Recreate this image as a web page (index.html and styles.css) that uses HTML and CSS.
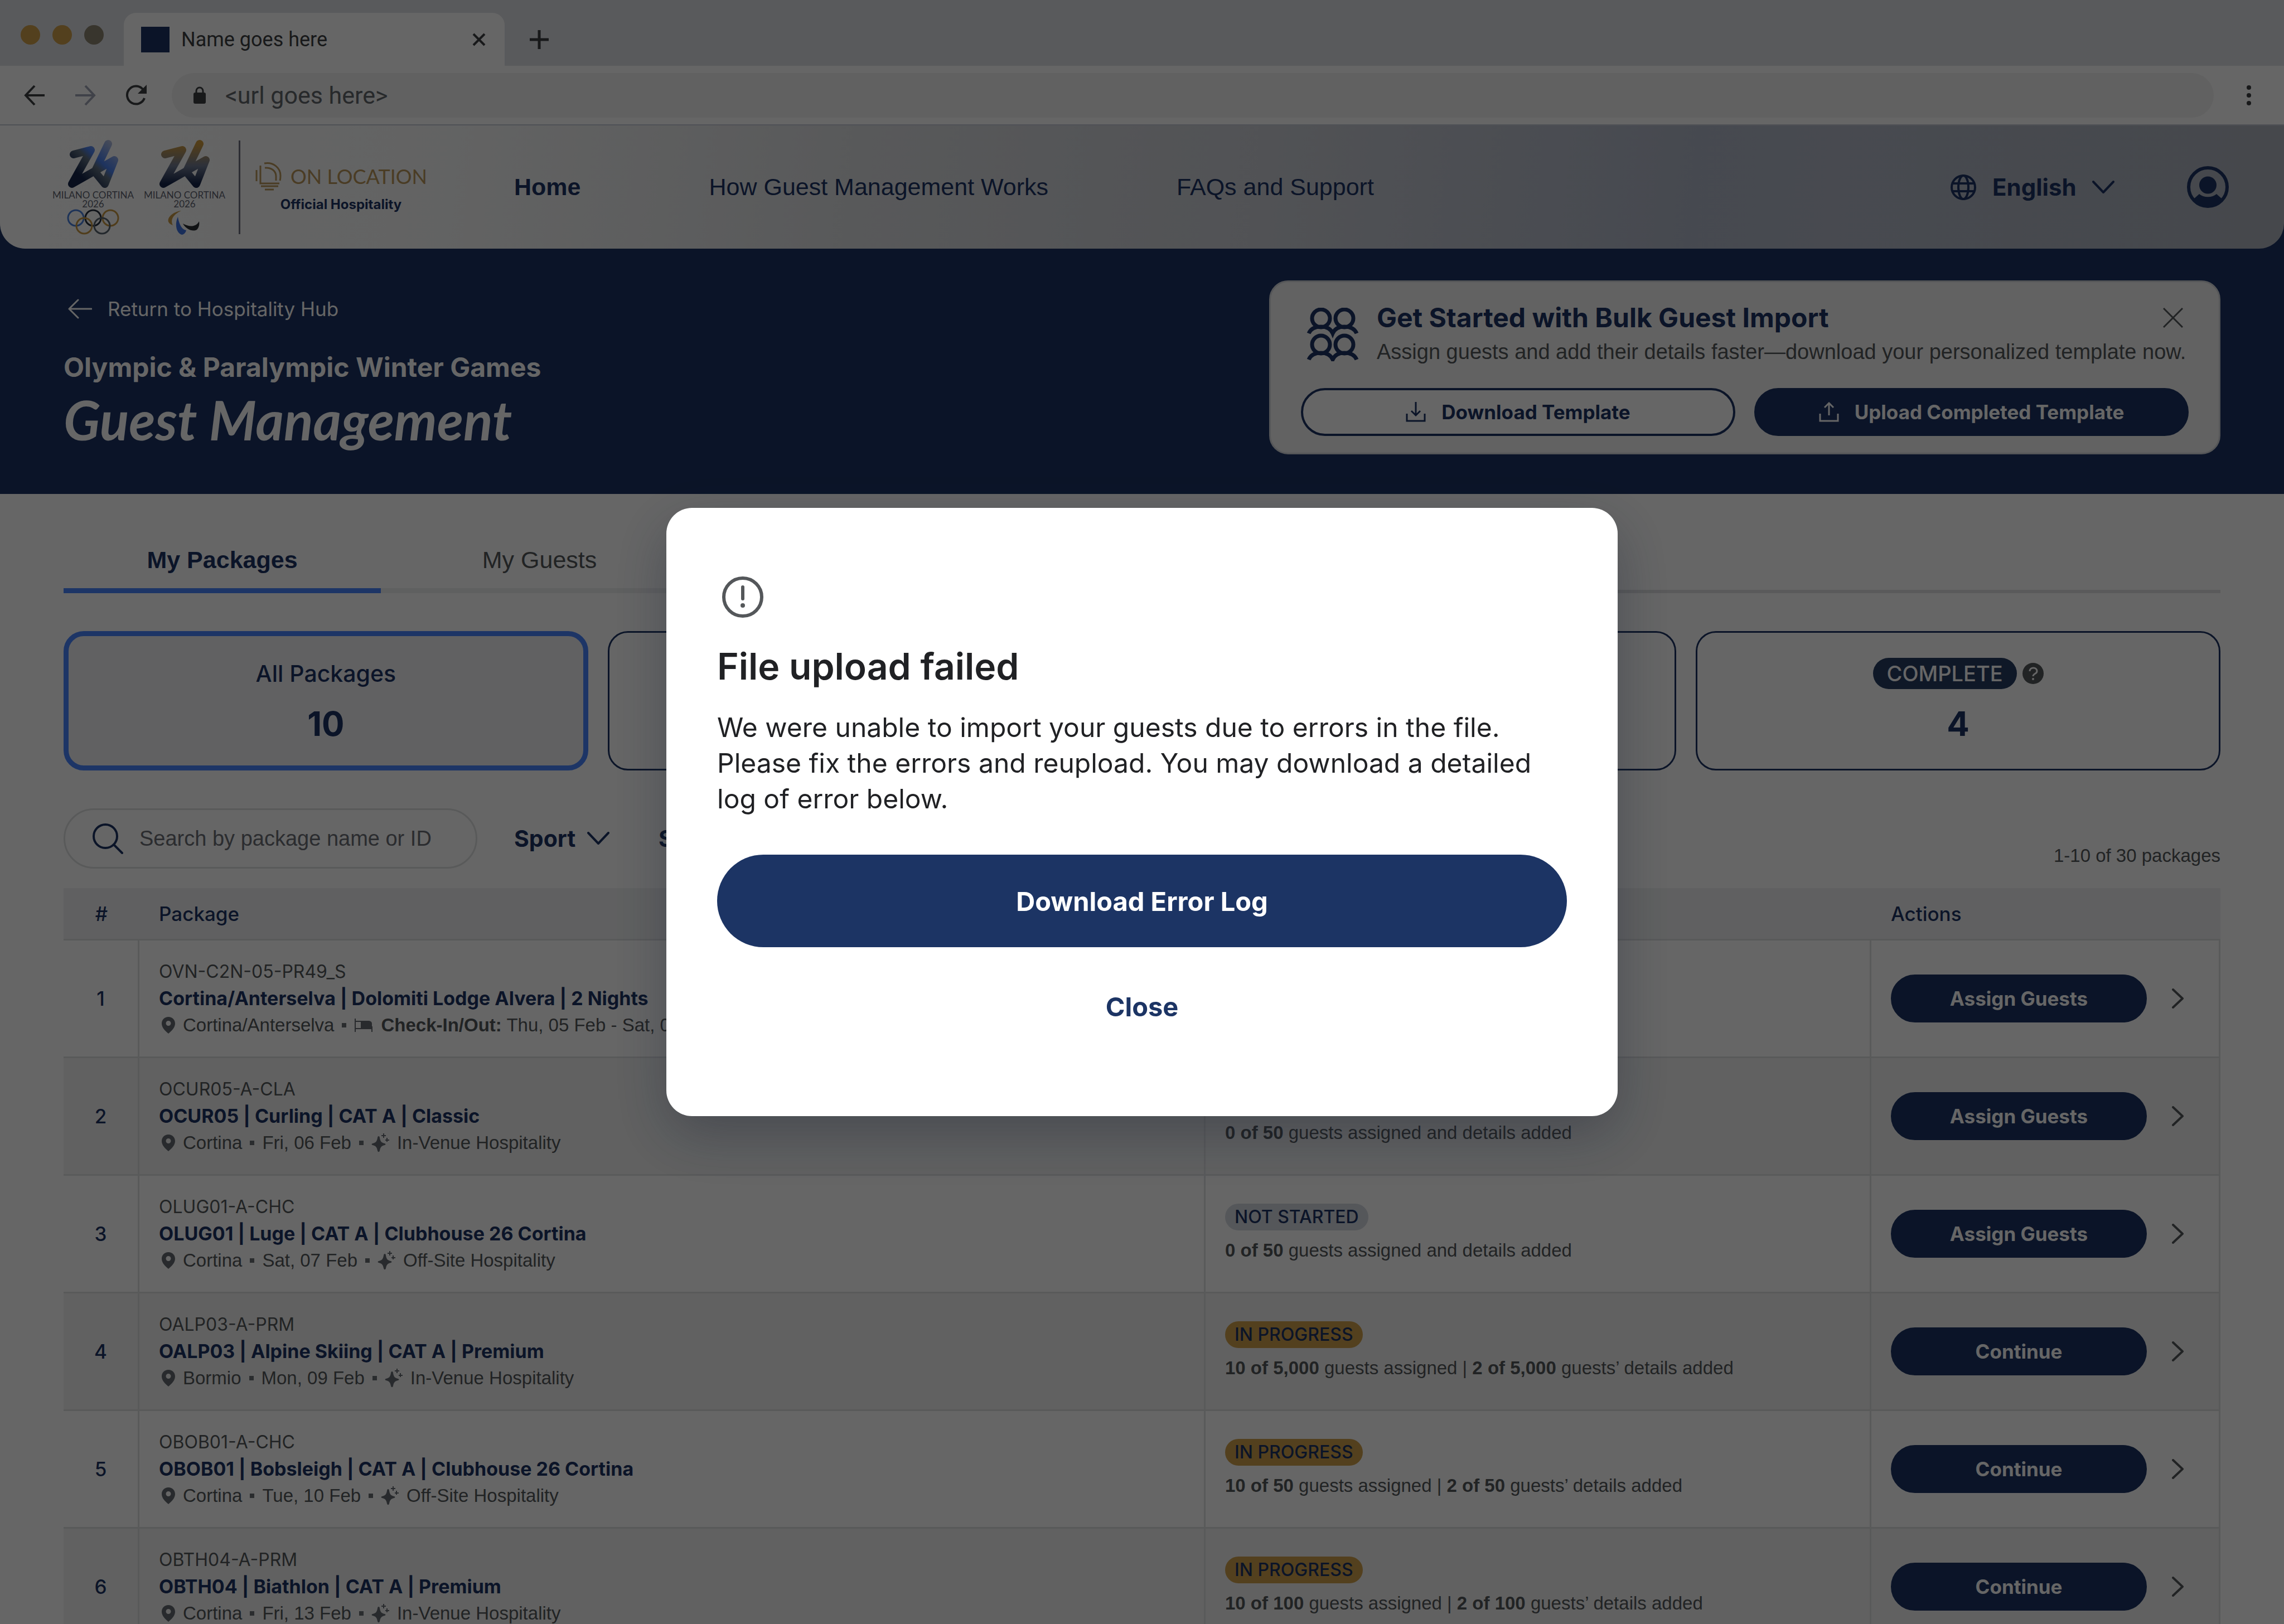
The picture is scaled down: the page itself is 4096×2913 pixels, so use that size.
FILE: index.html
```html
<!DOCTYPE html>
<html lang="en">
<head>
  <meta charset="UTF-8">
  <meta name="viewport" content="width=device-width, initial-scale=1">
  <title>Guest Management</title>
  <link rel="stylesheet" href="styles.css">
</head>

<body>

<!-- Icons -->
<svg class="sprite" aria-hidden="true">
  <symbol id="i-chevron" viewBox="0 0 40 24"><path d="M2 2 L20 21 L38 2" fill="none" stroke="currentColor" stroke-width="4" stroke-linecap="round" stroke-linejoin="round"/></symbol>
  <symbol id="i-right" viewBox="0 0 24 36"><path d="M3 2 L20 18 L3 34" fill="none" stroke="currentColor" stroke-width="4" stroke-linecap="round" stroke-linejoin="round"/></symbol>
  <symbol id="i-pin" viewBox="0 0 24 30"><path fill="currentColor" fill-rule="evenodd" d="M12 0 C5 0 0 5 0 12 C0 19 6 25 12 30 C18 25 24 19 24 12 C24 5 19 0 12 0 Z M12 7 A4.5 4.5 0 1 1 12 16 A4.5 4.5 0 1 1 12 7 Z"/></symbol>
  <symbol id="i-bed" viewBox="0 0 34 24"><path fill="none" stroke="currentColor" stroke-width="2" d="M2 0 V24 M32 14 V24 M2 18 H32 M2 5 H13"/><path fill="currentColor" d="M12 4 H27 Q32 5 32 9 V18 H12 Z"/></symbol>
  <symbol id="i-spark" viewBox="0 0 32 34"><path fill="currentColor" d="M13 5 C14 5 15 6 15 8 C16 14 18 17 24 18 C26 19 26 20 24 21 C18 22 16 25 15 31 C14 34 12 34 11 31 C10 25 8 22 2 21 C0 20 0 19 2 18 C8 17 10 14 11 8 C11 6 12 5 13 5 Z"/><path fill="none" stroke="currentColor" stroke-width="2" d="M22 0 V8 M18 4 H26 M28 8 V15 M25 12 H32"/></symbol>
  <symbol id="games-mark" viewBox="0 0 150 90"><path d="M40 27 L71 19 L37 80 L113 37 L96 80 L78 58 L102 8" fill="none" stroke-width="14" stroke-linecap="round" stroke-linejoin="round"/></symbol>
</svg>

<!-- Browser bar -->
<div class="browser">
  <div class="tab-strip">
    <div class="lights"><span></span><span></span><span class="dim"></span></div>
    <div class="browser-tab">
      <span class="favicon"></span>
      <span class="tab-name">Name goes here</span>
      <svg class="tab-close" viewBox="0 0 24 24"><path d="M2 2 L22 22 M22 2 L2 22" stroke="currentColor" stroke-width="4" fill="none"/></svg>
    </div>
    <svg class="tab-new" viewBox="0 0 34 34"><path d="M17 0 V34 M0 17 H34" stroke="currentColor" stroke-width="5" fill="none"/></svg>
  </div>
  <div class="toolbar">
    <svg class="tool" viewBox="0 0 40 40"><path d="M38 20 H4 M20 3 L4 20 L20 37" stroke="currentColor" stroke-width="4" fill="none"/></svg>
    <svg class="tool off" viewBox="0 0 40 40"><path d="M2 20 H36 M20 3 L36 20 L20 37" stroke="currentColor" stroke-width="4" fill="none"/></svg>
    <svg class="tool" viewBox="0 0 40 40"><path d="M35 25 A16 16 0 1 1 32 9" stroke="currentColor" stroke-width="4" fill="none"/><path d="M39 1 V17 H23 Z" fill="currentColor"/></svg>
    <label class="url">
      <svg viewBox="0 0 24 32"><path d="M6 12 V8 A6 6 0 0 1 18 8 V12" fill="none" stroke="currentColor" stroke-width="3"/><rect x="1" y="11" width="22" height="20" rx="3" fill="currentColor"/></svg>
      <input type="text" value="&lt;url goes here&gt;" aria-label="Address">
    </label>
    <svg class="dots" viewBox="0 0 10 38"><circle cx="5" cy="5" r="4"/><circle cx="5" cy="19" r="4"/><circle cx="5" cy="33" r="4"/></svg>
  </div>
</div>

<div class="page-top">
<header class="site-header">
  <div class="logos">
    <svg class="games-logo" viewBox="0 0 150 172">
      <defs><linearGradient id="cool" x1="0" y1="1" x2="1" y2="0"><stop offset=".2" stop-color="#14254a"/><stop offset=".5" stop-color="#5f6f80"/><stop offset=".62" stop-color="#4a80ee"/><stop offset="1" stop-color="#b7c0dc"/></linearGradient></defs>
      <use href="#games-mark" width="150" height="90" stroke="url(#cool)"/>
      <text x="75" y="106" class="games-name">MILANO CORTINA</text>
      <text x="75" y="122" class="games-name">2026</text>
      <g fill="none" stroke-width="3">
        <circle cx="44" cy="141" r="14" stroke="#4a80dd"/><circle cx="75" cy="141" r="14" stroke="#27303f"/><circle cx="106" cy="141" r="14" stroke="#c89a45"/>
        <circle cx="59" cy="155" r="14" stroke="#c89a45"/><circle cx="91" cy="155" r="14" stroke="#59656f"/>
      </g>
    </svg>
    <svg class="games-logo" viewBox="0 0 150 172">
      <defs><linearGradient id="warm" x1="0" y1="1" x2="0" y2="0"><stop offset="0" stop-color="#14254a"/><stop offset=".45" stop-color="#707a92"/><stop offset="1" stop-color="#cf9b3e"/></linearGradient></defs>
      <use href="#games-mark" width="150" height="90" stroke="url(#warm)"/>
      <text x="75" y="106" class="games-name">MILANO CORTINA</text>
      <text x="75" y="122" class="games-name">2026</text>
      <path d="M69 128 C50 130 36 148 54 154 C50 146 52 136 69 128 Z" fill="#c89a45"/>
      <path d="M63 139 C57 152 60 168 70 171 C74 171 77 167 78 163 C70 162 65 152 63 139 Z" fill="#3f74e0"/>
      <path d="M72 151 C78 162 90 166 97 162 C101 158 102 152 101 147 C96 157 84 158 72 151 Z" fill="#2a2d33"/>
    </svg>
    <div class="partner">
      <div class="on-location">
        <svg viewBox="0 0 48 52" fill="none" stroke="currentColor" stroke-width="3"><path d="M3 15 V35"/><path d="M10 7 V39 H44"/><path d="M17 3 C33 0 46 11 46 25 C46 29 46 31 45 34"/><path d="M18 11 C30 10 38 17 38 26 V34"/><path d="M11 44 H42"/><path d="M18 50 H34"/></svg>
        <span>ON LOCATION</span>
      </div>
      <strong>Official Hospitality</strong>
    </div>
  </div>
  <nav>
    <a href="#" class="current">Home</a>
    <a href="#">How Guest Management Works</a>
    <a href="#">FAQs and Support</a>
  </nav>
  <div class="account">
    <label class="language">
      <svg class="globe" viewBox="0 0 48 48" fill="none" stroke="currentColor" stroke-width="4"><circle cx="24" cy="24" r="21"/><ellipse cx="24" cy="24" rx="9" ry="21"/><path d="M4 17 H44 M4 31 H44"/></svg>
      <select aria-label="Language"><option>English</option></select>
      <svg class="chevron"><use href="#i-chevron"/></svg>
    </label>
    <a href="#" aria-label="Account">
      <svg class="avatar" viewBox="0 0 75 75"><circle cx="37.5" cy="37.5" r="34.5" fill="none" stroke="currentColor" stroke-width="6"/><circle cx="37.5" cy="34" r="15.5" fill="currentColor"/><path fill="currentColor" d="M13 58 L22 50 C30 57 45 57 53 50 L62 58 C48 78 27 78 13 58 Z"/></svg>
    </a>
  </div>
</header>

<section class="hero">
  <div class="hero-text">
    <a href="#" class="return"><svg viewBox="0 0 44 36"><path d="M43 18 H3 M19 2 L3 18 L19 34" stroke="currentColor" stroke-width="3" fill="none" stroke-linecap="round"/></svg>Return to Hospitality Hub</a>
    <h2>Olympic &amp; Paralympic Winter Games</h2>
    <h1>Guest Management</h1>
  </div>
  <div class="import-card">
    <div class="import-head">
      <svg class="people" viewBox="0 0 94 96" fill="none" stroke="currentColor" stroke-width="7">
        <circle cx="26" cy="19" r="16"/><circle cx="68" cy="19" r="16"/><path d="M4 46 Q9 34 26 34 Q42 34 47 46 Q52 34 68 34 Q85 34 90 46"/>
        <circle cx="26" cy="66" r="16"/><circle cx="68" cy="66" r="16"/><path d="M4 93 Q9 81 26 81 Q42 81 47 93 Q52 81 68 81 Q85 81 90 93"/>
      </svg>
      <div class="import-text">
        <h3>Get Started with Bulk Guest Import</h3>
        <p>Assign guests and add their details faster—download your personalized template now.</p>
      </div>
      <button class="dismiss" aria-label="Dismiss"><svg viewBox="0 0 36 36"><path d="M1 1 L35 35 M35 1 L1 35" stroke="currentColor" stroke-width="3"/></svg></button>
    </div>
    <div class="import-actions">
      <button class="pill outline"><svg viewBox="0 0 36 36"><path d="M18 0 V24 M10 16 L18 24 L26 16 M2 21 V34 H34 V21" stroke="currentColor" stroke-width="3" fill="none"/></svg>Download Template</button>
      <button class="pill"><svg viewBox="0 0 36 36"><path d="M18 24 V2 M10 10 L18 2 L26 10 M2 21 V34 H34 V21" stroke="currentColor" stroke-width="3" fill="none"/></svg>Upload Completed Template</button>
    </div>
  </div>
</section>
</div>

<main>
  <div class="tabs">
    <a href="#" class="active">My Packages</a>
    <a href="#">My Guests</a>
  </div>

  <div class="summary">
    <button class="stat selected"><span class="stat-label">All Packages</span><b>10</b></button>
    <button class="stat" aria-label="Not started"></button>
    <button class="stat" aria-label="In progress"></button>
    <button class="stat"><span class="stat-label"><span class="badge big complete">COMPLETE</span><svg class="help" viewBox="0 0 38 38"><circle cx="19" cy="19" r="19" fill="currentColor"/><path d="M13 15 C13 7 26 7 26 15 C26 20 19 19 19 24" fill="none" stroke="#fff" stroke-width="3"/><circle cx="19" cy="29" r="2" fill="#fff"/></svg></span><b>4</b></button>
  </div>

  <div class="filters">
    <label class="search">
      <svg viewBox="0 0 56 56"><circle cx="24" cy="24" r="21" fill="none" stroke="currentColor" stroke-width="4"/><path d="M39 39 L54 54" stroke="currentColor" stroke-width="4" stroke-linecap="round"/></svg>
      <input type="text" placeholder="Search by package name or ID" aria-label="Search packages">
    </label>
    <label class="filter"><select aria-label="Sport"><option>Sport</option></select><svg class="chevron"><use href="#i-chevron"/></svg></label>
    <label class="filter"><select aria-label="Status"><option>Status</option></select><svg class="chevron"><use href="#i-chevron"/></svg></label>
    <span class="count">1-10 of 30 packages</span>
  </div>

  <table>
    <colgroup><col class="c-num"><col><col class="c-status"><col class="c-actions"></colgroup>
    <thead>
      <tr><th>#</th><th>Package</th><th aria-label="Status"></th><th>Actions</th></tr>
    </thead>
    <tbody>
      <tr>
        <td>1</td>
        <td>
          <div class="code">OVN-C2N-05-PR49_S</div>
          <div class="name">Cortina/Anterselva | Dolomiti Lodge Alvera | 2 Nights</div>
          <div class="meta"><svg class="pin"><use href="#i-pin"/></svg>Cortina/Anterselva<i></i><svg class="bed"><use href="#i-bed"/></svg><span><b>Check-In/Out:</b> Thu, 05 Feb - Sat, 07 Feb</span></div>
        </td>
        <td><span class="badge">NOT STARTED</span><p><b>0 of 50</b> guests assigned and details added</p></td>
        <td><div class="actions"><button class="pill">Assign Guests</button><svg class="go"><use href="#i-right"/></svg></div></td>
      </tr>
      <tr>
        <td>2</td>
        <td>
          <div class="code">OCUR05-A-CLA</div>
          <div class="name">OCUR05 | Curling | CAT A | Classic</div>
          <div class="meta"><svg class="pin"><use href="#i-pin"/></svg>Cortina<i></i>Fri, 06 Feb<i></i><svg class="spark"><use href="#i-spark"/></svg>In-Venue Hospitality</div>
        </td>
        <td><span class="badge">NOT STARTED</span><p><b>0 of 50</b> guests assigned and details added</p></td>
        <td><div class="actions"><button class="pill">Assign Guests</button><svg class="go"><use href="#i-right"/></svg></div></td>
      </tr>
      <tr>
        <td>3</td>
        <td>
          <div class="code">OLUG01-A-CHC</div>
          <div class="name">OLUG01 | Luge | CAT A | Clubhouse 26 Cortina</div>
          <div class="meta"><svg class="pin"><use href="#i-pin"/></svg>Cortina<i></i>Sat, 07 Feb<i></i><svg class="spark"><use href="#i-spark"/></svg>Off-Site Hospitality</div>
        </td>
        <td><span class="badge">NOT STARTED</span><p><b>0 of 50</b> guests assigned and details added</p></td>
        <td><div class="actions"><button class="pill">Assign Guests</button><svg class="go"><use href="#i-right"/></svg></div></td>
      </tr>
      <tr>
        <td>4</td>
        <td>
          <div class="code">OALP03-A-PRM</div>
          <div class="name">OALP03 | Alpine Skiing | CAT A | Premium</div>
          <div class="meta"><svg class="pin"><use href="#i-pin"/></svg>Bormio<i></i>Mon, 09 Feb<i></i><svg class="spark"><use href="#i-spark"/></svg>In-Venue Hospitality</div>
        </td>
        <td><span class="badge progress">IN PROGRESS</span><p><b>10 of 5,000</b> guests assigned | <b>2 of 5,000</b> guests’ details added</p></td>
        <td><div class="actions"><button class="pill">Continue</button><svg class="go"><use href="#i-right"/></svg></div></td>
      </tr>
      <tr>
        <td>5</td>
        <td>
          <div class="code">OBOB01-A-CHC</div>
          <div class="name">OBOB01 | Bobsleigh | CAT A | Clubhouse 26 Cortina</div>
          <div class="meta"><svg class="pin"><use href="#i-pin"/></svg>Cortina<i></i>Tue, 10 Feb<i></i><svg class="spark"><use href="#i-spark"/></svg>Off-Site Hospitality</div>
        </td>
        <td><span class="badge progress">IN PROGRESS</span><p><b>10 of 50</b> guests assigned | <b>2 of 50</b> guests’ details added</p></td>
        <td><div class="actions"><button class="pill">Continue</button><svg class="go"><use href="#i-right"/></svg></div></td>
      </tr>
      <tr>
        <td>6</td>
        <td>
          <div class="code">OBTH04-A-PRM</div>
          <div class="name">OBTH04 | Biathlon | CAT A | Premium</div>
          <div class="meta"><svg class="pin"><use href="#i-pin"/></svg>Cortina<i></i>Fri, 13 Feb<i></i><svg class="spark"><use href="#i-spark"/></svg>In-Venue Hospitality</div>
        </td>
        <td><span class="badge progress">IN PROGRESS</span><p><b>10 of 100</b> guests assigned | <b>2 of 100</b> guests’ details added</p></td>
        <td><div class="actions"><button class="pill">Continue</button><svg class="go"><use href="#i-right"/></svg></div></td>
      </tr>
    </tbody>
  </table>
</main>

<!-- Upload error modal -->
<div class="overlay">
  <div class="modal" role="dialog" aria-modal="true" aria-labelledby="modal-title">
    <svg class="alert" viewBox="0 0 92 92"><circle cx="46" cy="46" r="34" fill="none" stroke="currentColor" stroke-width="6"/><path d="M46 28 V49" stroke="currentColor" stroke-width="6" stroke-linecap="round"/><circle cx="46" cy="61" r="4" fill="currentColor"/></svg>
    <h2 id="modal-title">File upload failed</h2>
    <p>We were unable to import your guests due to errors in the file. Please fix the errors and reupload. You may download a detailed log of error below.</p>
    <button class="primary">Download Error Log</button>
    <button class="close">Close</button>
  </div>
</div>

</body>
</html>
```
FILE: styles.css
```css
/* Base styles */
* {
  box-sizing: border-box;
}

body {
  margin: 0;
  height: 100vh;
  overflow: hidden;
  background: #fff;
  color: #54575a;
  font-family: "Liberation Sans", Arial, sans-serif;
  font-size: 33px;
}

h1, h2, h3, p {
  margin: 0;
}

a {
  color: inherit;
  text-decoration: none;
}

button, input, select {
  font: inherit;
  color: inherit;
  border: 0;
  padding: 0;
  background: none;
  outline: none;
}

select {
  appearance: none;
}

svg {
  display: block;
  flex: none;
}

.sprite {
  position: absolute;
  width: 0;
  height: 0;
}

/* Browser bar */
.browser {
  font-family: Roboto, sans-serif;
  color: #3c4043;
  border-bottom: 2px solid #c5cad8;
}

.tab-strip {
  display: flex;
  align-items: flex-end;
  height: 118px;
  background: #dee1e6;
}

.lights {
  display: flex;
  gap: 22px;
  padding: 0 36px 38px 37px;
}

.lights span {
  width: 35px;
  height: 35px;
  border-radius: 50%;
  background: #cfa04b;
}

.lights .dim {
  background: #8d8471;
}

.browser-tab {
  display: flex;
  align-items: center;
  gap: 21px;
  width: 683px;
  height: 95px;
  padding: 0 34px 0 31px;
  border-radius: 22px 22px 0 0;
  background: #fff;
}

.favicon {
  width: 51px;
  height: 46px;
  background: #1c3464;
}

.tab-name {
  flex: 1;
  font-size: 36px;
}

.tab-close {
  width: 24px;
  height: 24px;
}

.tab-new {
  width: 34px;
  height: 34px;
  margin: 0 0 30px 45px;
}

.toolbar {
  display: flex;
  align-items: center;
  height: 105px;
  padding: 0 58px 0 42px;
}

.tool {
  width: 40px;
  height: 40px;
  margin-right: 51px;
}

.tool + .url {
  margin-left: -7px;
}

.tool.off {
  color: #a0a6b6;
}

.url {
  display: flex;
  flex: 1;
  align-items: center;
  gap: 34px;
  height: 80px;
  padding: 0 38px;
  border-radius: 40px;
  background: #f2f2f2;
  color: #3c4043;
}

.url svg {
  width: 24px;
  height: 32px;
}

.url input {
  flex: 1;
  font-size: 43px;
  color: #63676c;
}

.dots {
  width: 10px;
  height: 38px;
  margin-left: 58px;
  fill: #3c4043;
}

/* Header */
.page-top {
  background: #1c3464;
  color: #1c3464;
}

.site-header {
  display: flex;
  align-items: center;
  height: 221px;
  padding: 0 99px 0 92px;
  border-radius: 0 0 45px 45px;
  background: linear-gradient(96deg, #fff 0%, #f6f7f7 20%, #dcdee1 38%, #cbced5 55%, #b0b7c8 74%, #b3b9c8 80%, #aeb4be 100%);
}

.logos {
  display: flex;
  align-items: center;
  gap: 14px;
}

.games-logo {
  width: 150px;
  height: 172px;
}

.games-name {
  font-family: Lato, sans-serif;
  font-size: 17px;
  fill: #5d6270;
  text-anchor: middle;
}

.partner {
  display: flex;
  flex-direction: column;
  align-items: center;
  justify-content: center;
  gap: 10px;
  width: 364px;
  height: 168px;
  margin-left: 8px;
  border-left: 3px solid #6e7280;
  font-family: Inter, sans-serif;
  font-size: 24px;
}

.on-location {
  display: flex;
  align-items: center;
  gap: 16px;
  color: #b9965a;
  font-family: Lato, sans-serif;
  font-size: 36px;
}

.on-location svg {
  width: 48px;
  height: 52px;
}

nav {
  display: flex;
  gap: 230px;
  margin-left: 130px;
  font-size: 43px;
}

.current {
  font-weight: bold;
}

.account {
  display: flex;
  align-items: center;
  gap: 130px;
  margin-left: auto;
}

.language {
  display: flex;
  align-items: center;
  gap: 28px;
  font-family: Inter, sans-serif;
  font-size: 42px;
  font-weight: 700;
}

.globe {
  width: 48px;
  height: 48px;
}

.chevron {
  width: 40px;
  height: 24px;
}

.avatar {
  width: 75px;
  height: 75px;
}

/* Hero */
.hero {
  display: flex;
  justify-content: space-between;
  align-items: flex-start;
  height: 440px;
  padding: 57px 114px 0;
}

.hero-text {
  padding-top: 26px;
  color: #fff;
}

.return {
  display: flex;
  align-items: center;
  gap: 28px;
  height: 50px;
  padding-left: 7px;
  font-family: Inter, sans-serif;
  font-size: 35px;
}

.return svg {
  width: 44px;
  height: 36px;
}

.hero-text h2 {
  margin-top: 48px;
  font-family: Inter, sans-serif;
  font-size: 48px;
  line-height: 64px;
  font-weight: 700;
}

.hero-text h1 {
  font-family: Lato, sans-serif;
  font-size: 97px;
  line-height: 124px;
  font-style: italic;
  font-weight: bold;
}

.import-card {
  width: 1706px;
  height: 312px;
  padding: 34px 54px 0;
  border: 3px solid #d5d8dd;
  border-radius: 34px;
  background: #f5f5f5;
}

.import-head {
  display: flex;
  align-items: flex-start;
  position: relative;
}

.people {
  width: 94px;
  height: 96px;
  margin: 12px 32px 0 10px;
}

.import-text h3 {
  font-family: Inter, sans-serif;
  font-size: 48px;
  line-height: 60px;
}

.import-text p {
  color: #54575a;
  font-size: 38px;
  line-height: 62px;
  white-space: nowrap;
}

/* sits over the end of the heading line */
.dismiss {
  position: absolute;
  top: 12px;
  right: 10px;
  color: #54575a;
}

.dismiss svg {
  width: 36px;
  height: 36px;
}

.import-actions {
  display: flex;
  gap: 34px;
  margin-top: 34px;
}

.pill {
  display: flex;
  flex: 1;
  align-items: center;
  justify-content: center;
  gap: 28px;
  height: 86px;
  border: 4px solid #1c3464;
  border-radius: 43px;
  background: #1c3464;
  color: #fff;
  font-family: Inter, sans-serif;
  font-size: 35px;
  font-weight: 700;
}

.pill svg {
  width: 36px;
  height: 36px;
}

.outline {
  background: #fff;
  color: #1c3464;
}

/* Tabs and summary */
main {
  padding: 62px 114px 0;
}

.tabs {
  display: flex;
  font-size: 43px;
  border-bottom: 6px solid #e0e1e3;
}

.tabs a {
  width: 569px;
  height: 116px;
  margin-bottom: -6px;
  border-bottom: 9px solid #eeeff0;
  line-height: 112px;
  text-align: center;
}

.tabs .active {
  border-color: #4a86ff;
  color: #1c3464;
  font-weight: bold;
}

.summary {
  display: grid;
  grid-template-columns: repeat(4, 1fr);
  gap: 35px;
  margin-top: 68px;
  font-family: Inter, sans-serif;
}

.stat {
  height: 250px;
  border: 3px solid #1c3464;
  border-radius: 36px;
  color: #1c3464;
  font-size: 41px;
}

.stat.selected {
  border: 9px solid #4a86ff;
  background: #f2f3f4;
}

.stat-label {
  display: flex;
  align-items: center;
  justify-content: center;
  gap: 10px;
  height: 60px;
  font-weight: 500;
}

.stat b {
  display: block;
  margin-top: 22px;
  font-size: 60px;
  line-height: 76px;
}

.help {
  width: 38px;
  height: 38px;
  color: #54575a;
}

.badge {
  display: inline-block;
  height: 48px;
  padding: 0 17px;
  border-radius: 24px;
  background: #d5d9e2;
  color: #1c3464;
  font-family: Inter, sans-serif;
  font-size: 32px;
  font-weight: 500;
  line-height: 48px;
}

.badge.big {
  height: 56px;
  padding: 0 25px;
  border-radius: 28px;
  font-size: 38px;
  line-height: 56px;
}

.badge.progress {
  background: #cfa04b;
}

.badge.complete {
  background: #273c63;
  color: #fff;
}

/* Filters */
.filters {
  display: flex;
  align-items: center;
  margin-top: 68px;
  color: #1c3464;
}

.search {
  display: flex;
  align-items: center;
  gap: 29px;
  width: 742px;
  height: 108px;
  margin-right: 66px;
  padding: 0 48px;
  border: 3px solid #dfe0e2;
  border-radius: 54px;
}

.search svg {
  width: 56px;
  height: 56px;
}

.search input {
  flex: 1;
  min-width: 0;
  font-size: 38px;
}

.search input::placeholder {
  color: #6b6f76;
  opacity: 1;
}

.filter {
  display: flex;
  align-items: center;
  gap: 20px;
  margin-right: 88px;
  font-family: Inter, sans-serif;
  font-size: 41px;
  font-weight: 700;
}

.count {
  align-self: flex-end;
  margin: 0 0 4px auto;
  color: #54575a;
}

/* Package table */
table {
  width: 100%;
  margin-top: 35px;
  border-collapse: separate;
  border-spacing: 0;
  table-layout: fixed;
}

.c-num {
  width: 136px;
}

.c-status {
  width: 1194px;
}

.c-actions {
  width: 626px;
}

th {
  height: 94px;
  padding: 0 35px;
  border-bottom: 3px solid #dfe0e2;
  background: #f0f1f2;
  color: #1c3464;
  font-family: Inter, sans-serif;
  font-size: 35px;
  font-weight: 500;
  text-align: left;
}

td {
  height: 211px;
  padding: 0 35px;
  border-right: 3px solid #dfe0e2;
  border-bottom: 3px solid #dfe0e2;
}

tbody tr:nth-child(even) {
  background: #f2f3f3;
}

th:first-child, td:first-child {
  padding: 0;
  text-align: center;
}

td:first-child {
  color: #1c3464;
  font-family: Inter, sans-serif;
  font-size: 35px;
  font-weight: 500;
}

.code {
  font-family: Inter, sans-serif;
  font-size: 32px;
  line-height: 48px;
}

.name {
  color: #1c3464;
  font-family: Inter, sans-serif;
  font-size: 34px;
  font-weight: 700;
  line-height: 48px;
}

.meta {
  display: flex;
  align-items: center;
  gap: 14px;
  padding-left: 5px;
  line-height: 48px;
  white-space: nowrap;
}

.meta i {
  width: 8px;
  height: 8px;
  background: #6a6f74;
}

.pin {
  width: 24px;
  height: 30px;
}

.bed {
  width: 34px;
  height: 24px;
}

.spark {
  width: 32px;
  height: 34px;
}

.pin, .bed, .spark {
  color: #646a70;
}

td p {
  margin-top: 12px;
  line-height: 48px;
}

.actions {
  display: flex;
  align-items: center;
  gap: 44px;
  padding-right: 26px;
}

.go {
  width: 24px;
  height: 36px;
}

/* Modal */
.overlay {
  position: fixed;
  inset: 0;
  display: flex;
  align-items: center;
  justify-content: center;
  background: rgba(0, 0, 0, 0.6);
}

.modal {
  display: flex;
  flex-direction: column;
  width: 1706px;
  padding: 114px 91px;
  border-radius: 46px;
  background: #fff;
  box-shadow: 0 34px 100px rgba(22, 32, 50, 0.35);
  color: #202124;
  font-family: Inter, sans-serif;
  font-size: 48px;
}

.alert {
  width: 92px;
  height: 92px;
  color: #54575a;
}

.modal h2 {
  margin: 38px 0;
  font-size: 66px;
  line-height: 80px;
  font-weight: 600;
}

.modal p {
  line-height: 64px;
}

.modal button {
  height: 166px;
  border-radius: 83px;
  font-size: 47px;
  font-weight: 700;
}

.primary {
  margin: 68px 0 23px;
  background: #1c3464;
  color: #fff;
}

.close {
  color: #1c3464;
}
```
